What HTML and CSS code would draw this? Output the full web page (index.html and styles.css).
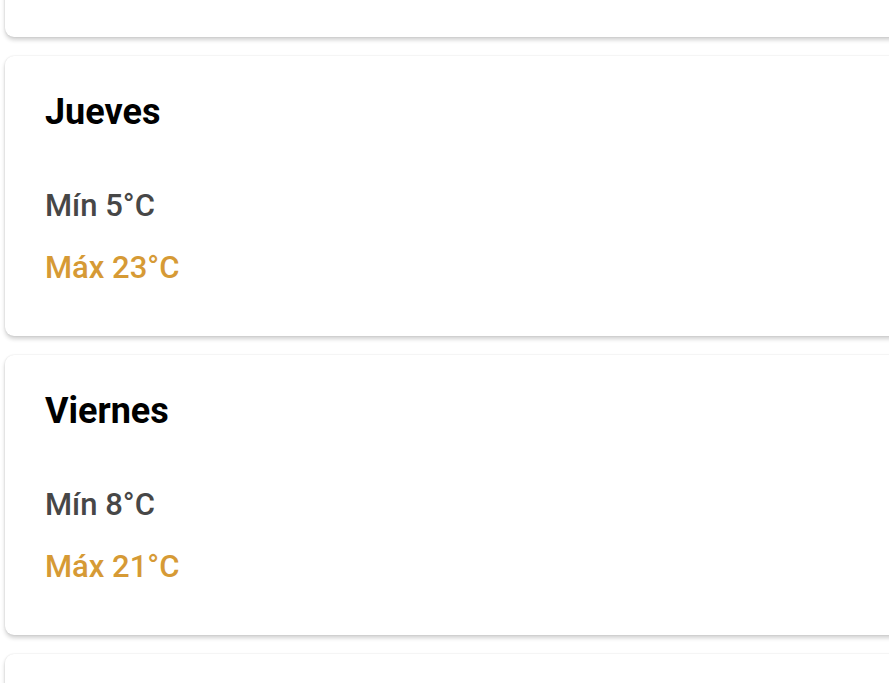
FILE: index.html
```html
<!DOCTYPE html>
<html lang="es">
<head>
    <meta charset="UTF-8" />
    <meta name="viewport" content="width=device-width, initial-scale=1.0" />
    <title>Pronóstico</title>
    <link rel="stylesheet" href="styles.css">
</head>
<body>
    <main class="days">
        <section class="day">
            <h2>Miércoles</h2>
            <p class="min">Mín 6°C</p>
            <p class="max">Máx 22°C</p>
        </section>
        <section class="day">
            <h2>Jueves</h2>
            <p class="min">Mín 5°C</p>
            <p class="max">Máx 23°C</p>
        </section>
        <section class="day">
            <h2>Viernes</h2>
            <p class="min">Mín 8°C</p>
            <p class="max">Máx 21°C</p>
        </section>
        <section class="day">
            <h2>Sábado</h2>
            <p class="min">Mín 9°C</p>
            <p class="max">Máx 20°C</p>
        </section>
    </main>
</body>
</html>
```

FILE: styles.css
```css
body {
    font-family: Roboto, 'Noto Sans', sans-serif;
    background: #ffffff;
    margin: 0;
    padding: 0;
    overflow: hidden;
}
.days {
    margin: -243px -20px 0 5px;
    display: flex;
    flex-direction: column;
    gap: 19px;
}
.day {
    background: white;
    height: 280px;
    box-sizing: border-box;
    padding: 35px 40px 0;
    border-radius: 9px;
    box-shadow: 0 3px 4px rgba(0,0,0,0.18), 0 0 2px rgba(0,0,0,0.12);
}
.day h2 {
    margin: 0 0 55px;
    font-size: 36px;
    line-height: 42px;
    font-weight: 700;
    color: #000;
}
.day p {
    margin: 0;
    font-size: 31px;
    line-height: 36px;
    font-weight: 500;
}
.min {
    color: #474747;
    margin-bottom: 26px !important;
}
.max {
    color: #d69a35;
}
```
